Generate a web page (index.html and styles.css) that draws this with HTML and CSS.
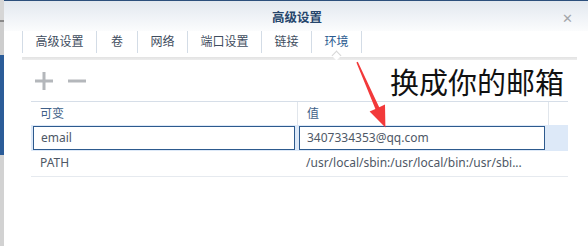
FILE: index.html
```html
<!DOCTYPE html>
<html lang="zh-CN">
<head>
  <meta charset="UTF-8" />
  <title>高级设置</title>
  <link rel="stylesheet" href="styles.css">
</head>
<body>
  <div class="page">
    <div class="desk"></div>
    <div class="dialog">
      <div class="titlebar">
        <span class="title">高级设置</span>
        <span class="close">&#x2715;</span>
      </div>
      <div class="tabs">
        <div class="tab">高级设置</div>
        <div class="tab tab-narrow">卷</div>
        <div class="tab">网络</div>
        <div class="tab">端口设置</div>
        <div class="tab">链接</div>
        <div class="tab active">环境</div>
      </div>
      <div class="tab-rule"></div>
      <div class="toolbar">
        <svg class="tool" width="20" height="20" viewBox="0 0 20 20">
          <path d="M10 1v18M1 10h18" stroke="#b4b7bb" stroke-width="3" fill="none" />
        </svg>
        <svg class="tool" width="20" height="20" viewBox="0 0 20 20">
          <path d="M1 10h18" stroke="#b4b7bb" stroke-width="3" fill="none" />
        </svg>
      </div>
      <div class="grid">
        <div class="row head">
          <div class="cell c1">可变</div>
          <div class="cell c2">值</div>
          <div class="cell c3"></div>
        </div>
        <div class="row selected">
          <div class="cell c1"><input class="edit" value="email" /></div>
          <div class="cell c2"><input class="edit" value="3407334353@qq.com" /></div>
          <div class="cell c3"></div>
        </div>
        <div class="row">
          <div class="cell c1">PATH</div>
          <div class="cell c2">/usr/local/sbin:/usr/local/bin:/usr/sbi...</div>
          <div class="cell c3"></div>
        </div>
      </div>
    </div>
    <div class="note">换成你的邮箱</div>
    <svg class="arrow" width="40" height="72" viewBox="350 58 40 72">
      <polygon fill="#f2393a" points="356.4,62.6 357.8,61.8 379.2,107.2 385,104.6 385.4,127.5 369.6,111.4 375.4,108.9" />
    </svg>
  </div>
</body>
</html>
```

FILE: styles.css
```css
body {
  margin: 0;
  overflow: hidden;
  background: #fff;
  font-family: "Noto Sans", "Noto Sans CJK SC", sans-serif;
  font-size: 12px;
  color: #4e5866;
}
.page {
  position: relative;
  display: flex;
  width: 588px;
  height: 246px;
  overflow: hidden;
}
.desk {
  width: 4px;
  flex: none;
  background: linear-gradient(#d6d6d6 0, #d6d6d6 20px, #8a8a8a 20px, #8a8a8a 22px, #cdcdcd 22px, #cdcdcd 55px, #2b5c98 55px, #2b5c98 155px, #d2d2d2 155px);
}
.dialog {
  flex: none;
  width: 586px;
  border-top: 1px solid #2c4f7c;
  background: #fff;
}
.titlebar {
  position: relative;
  height: 30px;
  display: flex;
  align-items: center;
  justify-content: center;
  background: linear-gradient(#e2e8ef, #fbfcfd);
}
.title {
  font-size: 12.5px;
  font-weight: bold;
  color: #26466c;
}
.close {
  position: absolute;
  right: 17px;
  top: 8px;
  font-size: 13px;
  color: #a3a6aa;
}
.tabs {
  display: flex;
  margin-left: 18px;
  height: 22px;
}
.tab {
  padding: 0 12.5px;
  border-left: 1px solid #d3dce6;
  line-height: 22px;
  text-align: center;
  color: #3f4d5e;
}
.tab-narrow {
  min-width: 40px;
  padding: 0;
}
.tab.active {
  position: relative;
  border-right: 1px solid #d3dce6;
  color: #2a5a90;
}
.tab.active::after {
  content: "";
  position: absolute;
  left: 50%;
  bottom: -6px;
  width: 6px;
  height: 6px;
  margin-left: -4px;
  background: #fff;
  border-top: 1px solid #d6d6d6;
  border-left: 1px solid #d6d6d6;
  transform: rotate(45deg);
}
.tab-rule {
  margin: 4px 13px 0 18px;
  height: 3px;
  background: linear-gradient(#e2e2e2, #ededed);
}
.toolbar {
  display: flex;
  align-items: center;
  gap: 13px;
  height: 41px;
  padding-left: 30px;
}
.grid {
  margin: 0 22px 0 27px;
  border-top: 1px solid #d6dee8;
}
.row {
  display: flex;
  height: 25px;
  border-bottom: 1px solid #e6eaef;
  line-height: 24px;
}
.row.head {
  height: 23px;
  border-bottom: none;
  color: #3f5f88;
}
.row.selected {
  height: 26px;
  border-bottom: none;
  background: #dde9f8;
}
.cell {
  padding-left: 9px;
  white-space: nowrap;
  overflow: hidden;
}
.c1 {
  width: 257px;
}
.c2 {
  width: 241px;
}
.c3 {
  flex: 1;
}
.head .c1,
.head .c2 {
  border-right: 1px solid #e1e6ec;
}
.selected .cell {
  padding: 1px 2px 0 2px;
}
.selected .c1 {
  width: 262px;
}
.selected .c2 {
  width: 246px;
}
.edit {
  display: block;
  box-sizing: border-box;
  width: 100%;
  height: 24px;
  margin: 0;
  padding: 0 7px;
  border: 1px solid #2d5a8e;
  background: #fff;
  font: inherit;
  color: #4e5866;
  outline: none;
}
.note {
  position: absolute;
  left: 390px;
  top: 63px;
  font-family: "Noto Sans CJK SC", sans-serif;
  font-size: 29px;
  line-height: 36px;
  color: #111;
}
.arrow {
  position: absolute;
  left: 350px;
  top: 58px;
}
```
